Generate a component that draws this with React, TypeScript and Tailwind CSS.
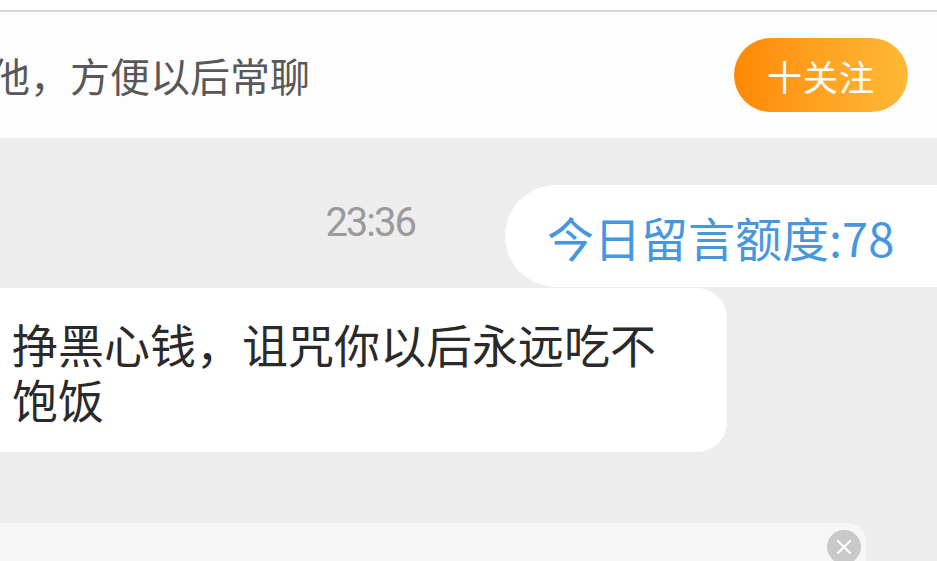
const cjk = "font-['Noto_Sans_CJK_SC','Noto_Sans',sans-serif]";

function CloseCircle() {
  return (
    <svg width="34" height="34" viewBox="0 0 34 34">
      <circle cx="17" cy="17" r="17" fill="#c9c9c9" />
      <path d="M11 11 L23 23 M23 11 L11 23" stroke="#fff" strokeWidth="2.2" strokeLinecap="round" />
    </svg>
  );
}

export default function App() {
  return (
    <div className={`w-[937px] h-[561px] overflow-hidden bg-[#ededed] ${cjk}`}>
      <div className="h-[10px] bg-white" />
      <div className="h-[2px] bg-[#d6d6d6] shadow-[0_1px_2px_rgba(0,0,0,0.08)]" />

      <div className="h-[126px] bg-[#fdfdfd] flex items-center justify-between pr-[29px]">
        <p className="-ml-[10px] text-[40px] leading-none text-[#585858] whitespace-nowrap">
          他，方便以后常聊
        </p>
        <button className="w-[174px] h-[74px] rounded-full bg-gradient-to-r from-[#ff8900] to-[#ffb935] text-white text-[35px] leading-none flex items-center justify-center tracking-[1px]">
          十关注
        </button>
      </div>

      <div className="pt-[47px]">
        <div className="flex justify-end items-start">
          <span className="mt-[14px] mr-[90px] text-[40px] leading-[48px] tracking-[-2px] text-[#9a9a9a] font-['Roboto',sans-serif]">
            23:36
          </span>
          <div className="shrink-0 w-[460px] h-[102px] -mr-[28px] bg-white rounded-l-[51px] flex items-center pl-[42px]">
            <span className="text-[47px] leading-none text-[#4797e0] whitespace-nowrap">
              今日留言额度:78
            </span>
          </div>
        </div>

        <div className="mt-[1px] -ml-[30px] w-[757px] bg-white rounded-[30px] pl-[42px] pr-[50px] pt-[28px] pb-[26px]">
          <p className="text-[46px] leading-[55px] text-[#2a2a2a]">
            挣黑心钱，诅咒你以后永远吃不饱饭
          </p>
        </div>

        <div className="mt-[71px] w-[866px] h-[60px] bg-[#f6f6f6] rounded-tr-[18px] flex justify-end pt-[7px] pr-[5px]">
          <CloseCircle />
        </div>
      </div>
    </div>
  );
}
